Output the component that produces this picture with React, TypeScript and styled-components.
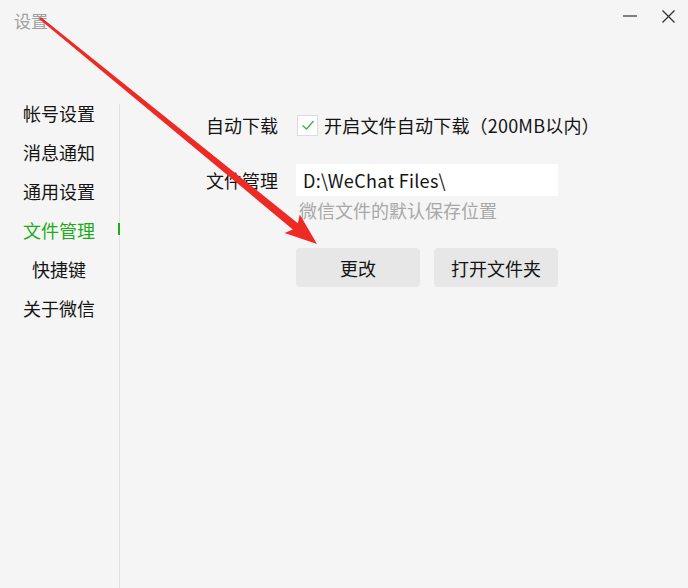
import React from "react";
import styled, { createGlobalStyle } from "styled-components";

const Global = createGlobalStyle`
  html, body { margin: 0; padding: 0; background: #f5f5f5; }
  body { font-family: "Noto Sans CJK SC", "Noto Sans", sans-serif; }
`;

const Window = styled.div`
  position: relative;
  width: 688px;
  height: 588px;
  background: #f5f5f5;
  display: flex;
  flex-direction: column;
  overflow: hidden;
  font-family: "Noto Sans CJK SC", "Noto Sans", sans-serif;
`;

const TitleBar = styled.div`
  height: 42px;
  display: flex;
  align-items: flex-start;
  justify-content: space-between;
  padding-left: 14px;
`;

const Title = styled.div`
  margin-top: 10px;
  font-size: 17px;
  line-height: 22px;
  color: #a0a0a0;
`;

const Controls = styled.div`
  display: flex;
`;

const CtrlBtn = styled.div`
  width: 39px;
  height: 32px;
  display: flex;
  align-items: center;
  justify-content: center;
`;

const Body = styled.div`
  flex: 1;
  display: flex;
  margin-top: 51px;
`;

const Sidebar = styled.div`
  width: 120px;
  display: flex;
`;

const Nav = styled.div`
  width: 119px;
  display: flex;
  flex-direction: column;
`;

const NavItem = styled.div<{ $active?: boolean }>`
  position: relative;
  height: 39px;
  display: flex;
  align-items: center;
  justify-content: center;
  padding-right: 1px;
  font-size: 18px;
  color: ${(p) => (p.$active ? "#1aad19" : "#141414")};
`;

const Indicator = styled.span`
  position: absolute;
  right: -1px;
  top: 13px;
  width: 2px;
  height: 12px;
  background: #1aad19;
  z-index: 2;
`;

const Divider = styled.div`
  width: 1px;
  margin-top: 11px;
  background: #e1e1e1;
`;

const Content = styled.div`
  flex: 1;
  padding: 21px 0 0 86px;
  display: grid;
  grid-template-columns: 72px 262px;
  column-gap: 18px;
  align-content: start;
`;

const Label = styled.div`
  font-size: 18px;
  line-height: 22px;
  color: #141414;
  align-self: center;
  white-space: nowrap;
`;

const CheckRow = styled.label`
  display: flex;
  align-items: center;
  height: 22px;
  white-space: nowrap;
  font-size: 18px;
  letter-spacing: 0.2px;
  color: #141414;
`;

const CheckBox = styled.span`
  flex-shrink: 0;
  width: 19px;
  height: 19px;
  margin-left: 1px;
  border: 1px solid #dcdcdc;
  background: #ffffff;
  display: flex;
  align-items: center;
  justify-content: center;
  margin-right: 6px;
`;

const Input = styled.div`
  margin-top: 28px;
  height: 32px;
  background: #ffffff;
  display: flex;
  align-items: center;
  padding-left: 7px;
  font-size: 18px;
  letter-spacing: 0.3px;
  color: #141414;
  white-space: nowrap;
`;

const LabelTop = styled(Label)`
  margin-top: 28px;
`;

const Hint = styled.div`
  grid-column: 2;
  margin-top: 4px;
  padding-left: 3px;
  font-size: 18px;
  line-height: 20px;
  color: #a8a8a8;
  white-space: nowrap;
`;

const ButtonRow = styled.div`
  grid-column: 2;
  margin-top: 28px;
  display: flex;
  gap: 14px;
`;

const Button = styled.div`
  width: 124px;
  height: 39px;
  border-radius: 4px;
  background: #e7e7e7;
  display: flex;
  align-items: center;
  justify-content: center;
  font-size: 18px;
  color: #141414;
`;

const ArrowLayer = styled.svg`
  position: absolute;
  left: 0;
  top: 0;
  pointer-events: none;
`;

const navItems = ["帐号设置", "消息通知", "通用设置", "文件管理", "快捷键", "关于微信"];

export default function App() {
  const tail = [40, 18];
  const tip = [317, 244];
  const dx = tip[0] - tail[0];
  const dy = tip[1] - tail[1];
  const len = Math.hypot(dx, dy);
  const ux = dx / len, uy = dy / len;
  const nx = -uy, ny = ux;
  const headLen = 32;
  const bx = tip[0] - ux * headLen, by = tip[1] - uy * headLen;
  const pt = (x: number, y: number) => `${x.toFixed(1)},${y.toFixed(1)}`;
  const pts = [
    pt(tail[0] + nx * 1.2, tail[1] + ny * 1.2),
    pt(bx + ux * 4 + nx * 4, by + uy * 4 + ny * 4),
    pt(bx + nx * 12, by + ny * 12),
    pt(tip[0], tip[1]),
    pt(bx - nx * 12, by - ny * 12),
    pt(bx + ux * 4 - nx * 4, by + uy * 4 - ny * 4),
    pt(tail[0] - nx * 1.2, tail[1] - ny * 1.2),
  ].join(" ");

  return (
    <Window>
      <Global />
      <TitleBar>
        <Title>设置</Title>
        <Controls>
          <CtrlBtn>
            <svg width="14" height="14" viewBox="0 0 14 14">
              <line x1="0" y1="7" x2="14" y2="7" stroke="#333" strokeWidth="1.2" />
            </svg>
          </CtrlBtn>
          <CtrlBtn>
            <svg width="13" height="13" viewBox="0 0 13 13">
              <path d="M0.5 0.5 L12.5 12.5 M12.5 0.5 L0.5 12.5" stroke="#333" strokeWidth="1.3" />
            </svg>
          </CtrlBtn>
        </Controls>
      </TitleBar>
      <Body>
        <Sidebar>
          <Nav>
            {navItems.map((n) => (
              <NavItem key={n} $active={n === "文件管理"}>
                {n}
                {n === "文件管理" && <Indicator />}
              </NavItem>
            ))}
          </Nav>
          <Divider />
        </Sidebar>
        <Content>
          <Label>自动下载</Label>
          <CheckRow>
            <CheckBox>
              <svg width="14" height="12" viewBox="0 0 14 12">
                <path d="M1.5 6.5 L5.5 10 L12.5 2" fill="none" stroke="#3cb043" strokeWidth="1.3" />
              </svg>
            </CheckBox>
            开启文件自动下载（200MB以内）
          </CheckRow>
          <LabelTop>文件管理</LabelTop>
          <Input>D:\WeChat Files\</Input>
          <Hint>微信文件的默认保存位置</Hint>
          <ButtonRow>
            <Button>更改</Button>
            <Button>打开文件夹</Button>
          </ButtonRow>
        </Content>
      </Body>
      <ArrowLayer width="688" height="588" viewBox="0 0 688 588">
        <polygon points={pts} fill="#ee2a24" />
      </ArrowLayer>
    </Window>
  );
}
